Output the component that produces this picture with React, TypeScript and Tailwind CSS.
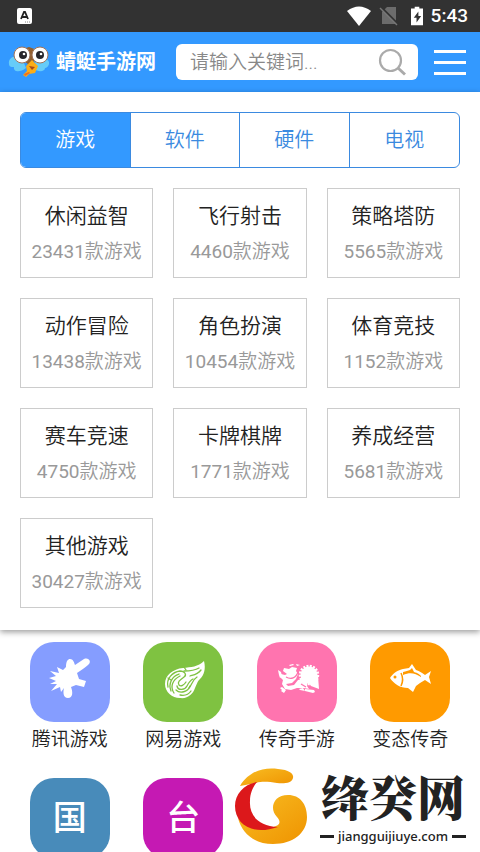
import type { ReactNode } from "react";

const tabs = ["游戏", "软件", "硬件", "电视"];

const categories = [
  { title: "休闲益智", count: 23431 },
  { title: "飞行射击", count: 4460 },
  { title: "策略塔防", count: 5565 },
  { title: "动作冒险", count: 13438 },
  { title: "角色扮演", count: 10454 },
  { title: "体育竞技", count: 1152 },
  { title: "赛车竞速", count: 4750 },
  { title: "卡牌棋牌", count: 1771 },
  { title: "养成经营", count: 5681 },
  { title: "其他游戏", count: 30427 },
];

function SplatIcon() {
  return (
    <svg viewBox="0 0 80 80" className="size-full" fill="#fff" aria-hidden="true">
      <path d="M36 25C36 19 38 17 40 17C43 17 44 20 45 23C48 21 51 19 54 17C59 15 62 20 58 23C55 26 51 28 47 31L49 37L56 39L54 45L46 43L41 45C43 50 43 56 38 56C33 56 33 50 34 46L31 50L30 45L21 49L27 42L20 42L26 39L19 36L26 34L20 29L29 31L27 25L33 28Z" />
    </svg>
  );
}

function FlameIcon() {
  return (
    <svg viewBox="0 0 80 80" className="size-full" fill="none" strokeLinecap="round" aria-hidden="true">
      <path d="M61 19c-6 6-13 6-21 7-10 1-18 7-18 16 0 8 7 14 15 14 8 1 13-4 15-10 2-4 2-6 5-9 4-4 6-10 4-18z" fill="#fff" />
      <g stroke="#7fc241" strokeWidth="1.3">
        <path d="M56 26c-5 3-11 3-15 3M58 28c-4 5-8 5-11 6M54 35c-5 3-5 8-8 11" />
        <path d="M25 45c-2-8 4-15 12-16 5 0 7 4 4 6-4 3-7 5-5 8 2 2 5 0 7-3" />
        <path d="M28 49c-3-7 1-15 8-17M31 51c-4-6-2-13 6-17M34 44c1 5 8 4 10 0 2-4 4-6 6-7M33 48c4 4 12 2 14-4M37 53c5 1 9-1 11-4M25 36l3 2M41 25l2 3" />
      </g>
    </svg>
  );
}

function DragonIcon() {
  return (
    <svg viewBox="0 0 80 80" className="size-full" fill="#fff" aria-hidden="true">
      <path d="M27 26l5 1 3-2 5 1-1 3 2 3-2 5-4 4-6 1 2 2 6-1 4-5 4-1 1 5 3 4h-9l-6 2-6-1-3-5 1-4-3-3 1-3 4 1 2-1-4-3z" />
      <path d="M21 28l3 2 1 4-2 2-1-3zM25 45l4 3-2 3-3-2 1-1-2-2zM32 23l4-1 1 1-4 1zM39 22l4 1-3 1z" />
      <circle cx="52" cy="33" r="8.5" />
      <circle cx="52" cy="33" r="9" fill="none" stroke="#fff" strokeWidth="2.5" strokeDasharray="2 1.3" />
      <path d="M44 35l8 3 9-4 1 13-8-3-3-4-1 4 2 3-5-1z" />
      <path d="M48 47l9 1 1 2-2 1-8-2zM42 47l4-1 2 3-5-1z" />
      <path d="M29 35c5 3 10 1 12-5M44 42l5 3" stroke="#ff74af" strokeWidth="1.3" fill="none" />
    </svg>
  );
}

function FishIcon() {
  return (
    <svg viewBox="0 0 80 80" className="size-full" aria-hidden="true">
      <path d="M20 36c3-5 8-8 13-9l6-1 3-4 4 6c4 1 6 3 9 5l6-4-2 6 2 7-6-4-5 3-4 3-3 6-5-4c-8 0-14-4-18-10z" fill="#fff" />
      <path d="M31 31c2 4 2 9 0 13" fill="none" stroke="#ff9a00" strokeWidth="1.5" />
      <path d="M33 30c3-1 5-1 7-2l2-2 2 4c4 1 5 2 7 4v1c-6-4-11-5-18-2z" fill="#ff9a00" />
      <circle cx="25" cy="35" r="1.5" fill="#ff9a00" />
    </svg>
  );
}

type Vendor = { label: string; color: string; icon: ReactNode };

const vendors: Vendor[] = [
  { label: "腾讯游戏", color: "bg-[#859dff]", icon: <SplatIcon /> },
  { label: "网易游戏", color: "bg-[#7fc241]", icon: <FlameIcon /> },
  { label: "传奇手游", color: "bg-[#ff74af]", icon: <DragonIcon /> },
  { label: "变态传奇", color: "bg-[#ff9a00]", icon: <FishIcon /> },
];

const regions = [
  { glyph: "国", color: "bg-[#488bba]" },
  { glyph: "台", color: "bg-[#c519b3]" },
];

function StatusBar() {
  return (
    <div className="flex h-8 items-center bg-[#323232] pr-3 pl-4 text-white">
      <svg viewBox="0 0 16 16" className="size-4" aria-hidden="true">
        <rect x="1" width="15" height="16" rx="2" fill="#fff" />
        <path d="M5 11l3-7h1l3 7M6 9h5" fill="none" stroke="#222" strokeWidth="1.8" />
        <path d="M9 14h5" stroke="#888" strokeDasharray="1 1" />
      </svg>
      <svg viewBox="0 0 24 20" className="ml-auto h-5 w-6" aria-hidden="true">
        <path d="M0 5Q12-4 24 5L12 20z" fill="#fff" />
      </svg>
      <svg viewBox="0 0 20 20" className="ml-2 size-5" aria-hidden="true">
        <path d="M8 1h9v17H3V6z" fill="#6c6c6c" />
        <path d="M2 1l17 17" stroke="#323232" strokeWidth="2" />
        <path d="M1 2l17 17" stroke="#777" strokeWidth="1.5" />
      </svg>
      <svg viewBox="0 0 13 20" className="ml-3 h-5 w-3" aria-hidden="true">
        <path d="M4 0h5v2h4v18H0V2h4z" fill="#fff" />
        <path d="M8 5l-5 7h3v5l5-7H8z" fill="#323232" />
      </svg>
      <span className="ml-2 text-[19px] leading-8 font-medium">5:43</span>
    </div>
  );
}

function BirdLogo() {
  return (
    <svg viewBox="0 0 42 32" className="h-8 w-[42px]" aria-hidden="true">
      <path d="M14 12C6 8 0 12 1 18c0 4 5 3 5 3-1 5 6 6 12 1zM28 14c8-4 14 0 13 4-1 4-4 4-4 4 0 4-7 4-11 1z" fill="#66ccf8" />
      <path d="M15 3l6-2 8 3v9l-8 6-6-5z" fill="#93602f" />
      <path d="M18 20l6-6 6 6-3 7-6 1-3 3-3-2 4-4z" fill="#fbad18" />
      <path d="M21 20l6 1-3 3z" fill="#a5471b" />
      <path d="M16 28l5-2 1 1-5 3z" fill="#ef6d22" />
      <circle cx="14" cy="9" r="8" fill="#fff" stroke="#9f735a" />
      <circle cx="32" cy="9" r="8" fill="#fff" stroke="#9f735a" />
      <circle cx="15" cy="9" r="4" fill="#27262b" />
      <circle cx="32" cy="9" r="4" fill="#27262b" />
      <circle cx="16" cy="8" r="1.3" fill="#fff" />
      <circle cx="33" cy="8" r="1.3" fill="#fff" />
    </svg>
  );
}

function Header() {
  return (
    <header className="flex h-[60px] items-center bg-[#3399ff] pr-3.5 pl-2">
      <a href="#" className="flex items-center gap-1.5 text-xl font-bold whitespace-nowrap text-white">
        <BirdLogo />
        蜻蜓手游网
      </a>
      <form className="mr-4 ml-5 flex h-9 min-w-0 flex-1 items-center rounded-md bg-white pr-3 pl-3.5">
        <input
          type="text"
          aria-label="搜索"
          placeholder="请输入关键词..."
          className="h-full min-w-0 flex-1 text-[19px] font-[350] text-gray-700 outline-none placeholder:text-[#888]"
        />
        <button type="button" aria-label="搜索" className="shrink-0">
          <svg viewBox="0 0 28 28" className="size-7" fill="none" stroke="#aaa" strokeWidth="2.2" aria-hidden="true">
            <circle cx="12.5" cy="12.5" r="10.5" />
            <path d="M20 20l7 6.5" strokeWidth="3" />
          </svg>
        </button>
      </form>
      <button type="button" aria-label="菜单" className="flex w-8 shrink-0 flex-col gap-2">
        <span className="h-[3px] bg-white" />
        <span className="h-[3px] bg-white" />
        <span className="h-[3px] bg-white" />
      </button>
    </header>
  );
}

function Watermark() {
  return (
    <div className="absolute right-3.5 bottom-1.5 flex items-end gap-3 text-[#222]">
      <svg viewBox="0 0 74 78" className="h-[78px] w-[74px]" aria-hidden="true">
        <defs>
          <linearGradient id="gold" x1="0" y1="0" x2="1" y2="1">
            <stop offset="0" stopColor="#f8bd23" />
            <stop offset="1" stopColor="#ef9300" />
          </linearGradient>
        </defs>
        <path d="M6 18C15 3 30-1 44 1c12 1 16 5 15 9-1 5-9 6-16 5-8-1-14-2-21 0z" fill="url(#gold)" />
        <path d="M4 50c12 12 26 13 38 8 5-2 4-6 1-9-8-8-4-22 11-22 12 0 19 9 19 22 0 16-14 27-34 27C21 76 8 66 4 50z" fill="url(#gold)" />
        <path d="M23 14C10 16 1 26 1 38c0 18 17 30 43 21-20-1-29-12-28-26 0-8 3-14 7-19z" fill="#dc181b" />
      </svg>
      <div className="flex flex-col items-center">
        <span className="font-['Noto_Serif_CJK_SC','Noto_Sans_CJK_SC',serif] text-5xl leading-[60px] font-black">绛癸网</span>
        <span className="flex items-center gap-1 font-['Noto_Sans'] text-[13px] leading-5 font-medium whitespace-nowrap">
          <span className="h-[3px] w-3.5 bg-[#222]" />
          jiangguijiuye.com
          <span className="h-[3px] w-3.5 bg-[#222]" />
        </span>
      </div>
    </div>
  );
}

export default function App() {
  return (
    <main className="relative h-screen overflow-hidden bg-white font-['Roboto','Noto_Sans_CJK_SC',sans-serif]">
      <StatusBar />
      <Header />

      {/* Category panel */}
      <section className="px-5 pt-5 pb-[22px] font-[350] shadow-[0_2px_6px_rgba(0,0,0,0.4)]">
        <div className="grid h-14 grid-cols-4 divide-x divide-[#3b8ae0] overflow-hidden rounded-md border border-[#3b8ae0]">
          {tabs.map((tab, i) => (
            <button key={tab} type="button" className={i === 0 ? "bg-[#3399ff] text-xl text-white" : "text-xl text-[#3b8ae0]"}>
              {tab}
            </button>
          ))}
        </div>

        <div className="mt-5 grid grid-cols-3 gap-5">
          {categories.map((item) => (
            <a key={item.title} href="#" className="flex h-[90px] flex-col items-center border border-[#ccc] pt-[9px] whitespace-nowrap">
              <span className="text-[21px] leading-9 text-[#222]">{item.title}</span>
              <span className="text-[19px] leading-9 text-[#999]">
                <span className="font-normal">{item.count}</span>款游戏
              </span>
            </a>
          ))}
        </div>
      </section>

      {/* Shortcuts */}
      <section className="grid grid-cols-4 gap-y-5 px-[13px] pt-3">
        {vendors.map((item) => (
          <a key={item.label} href="#" className="flex flex-col items-center whitespace-nowrap">
            <span className={`size-20 rounded-3xl ${item.color}`}>{item.icon}</span>
            <span className="text-[19px] leading-9 font-[350] text-[#222]">{item.label}</span>
          </a>
        ))}
        {regions.map((item) => (
          <a key={item.glyph} href="#" className="flex flex-col items-center">
            <span className={`flex size-20 items-center justify-center rounded-3xl text-[34px] font-medium text-white ${item.color}`}>{item.glyph}</span>
          </a>
        ))}
      </section>

      <Watermark />
    </main>
  );
}
